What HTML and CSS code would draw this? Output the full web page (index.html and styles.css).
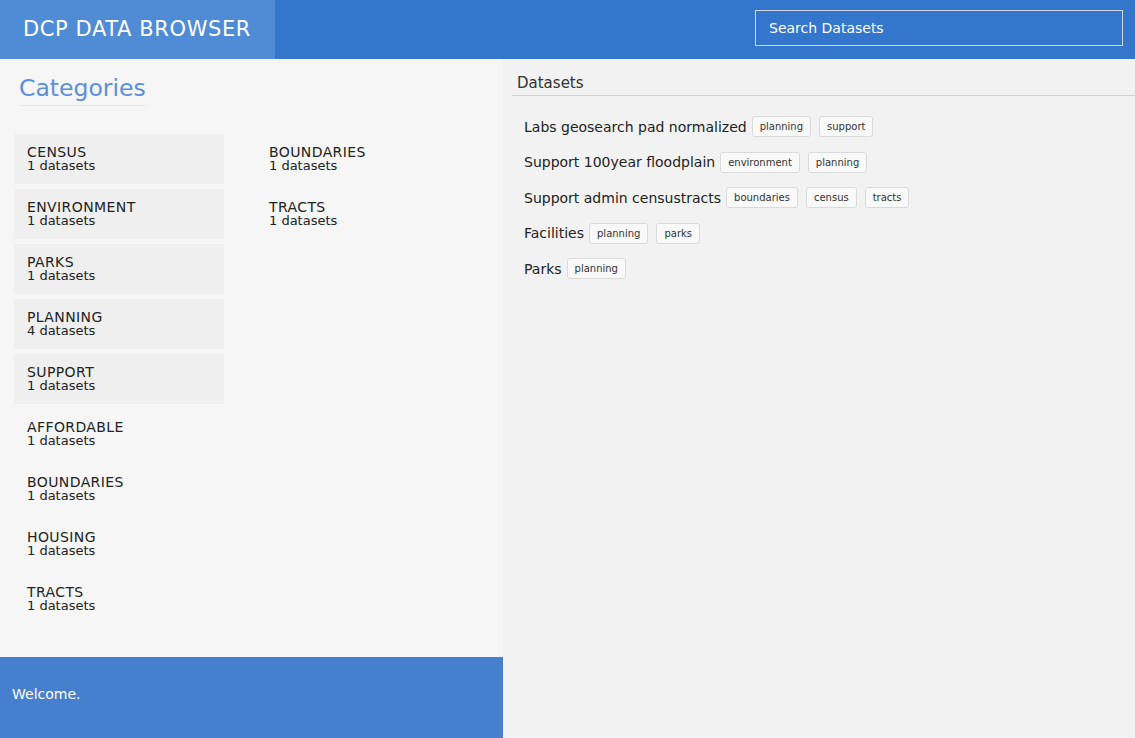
FILE: index.html
```html
<!DOCTYPE html>
<html>
<head>
<meta charset="utf-8">
<link rel="stylesheet" href="styles.css">
</head>
<body>
<header class="topbar">
  <div class="brand">DCP DATA BROWSER</div>
  <div class="search-wrap">
    <div class="search">Search Datasets</div>
  </div>
</header>
<div class="layout">
  <aside class="sidebar">
    <div class="sidebar-body">
      <h2 class="cat-title">Categories</h2>
      <div class="cat-grid">
        <div class="cat-col">
          <div class="cat filled"><div class="cat-name">CENSUS</div><div class="cat-count">1 datasets</div></div>
          <div class="cat filled"><div class="cat-name">ENVIRONMENT</div><div class="cat-count">1 datasets</div></div>
          <div class="cat filled"><div class="cat-name">PARKS</div><div class="cat-count">1 datasets</div></div>
          <div class="cat filled"><div class="cat-name">PLANNING</div><div class="cat-count">4 datasets</div></div>
          <div class="cat filled"><div class="cat-name">SUPPORT</div><div class="cat-count">1 datasets</div></div>
          <div class="cat"><div class="cat-name">AFFORDABLE</div><div class="cat-count">1 datasets</div></div>
          <div class="cat"><div class="cat-name">BOUNDARIES</div><div class="cat-count">1 datasets</div></div>
          <div class="cat"><div class="cat-name">HOUSING</div><div class="cat-count">1 datasets</div></div>
          <div class="cat"><div class="cat-name">TRACTS</div><div class="cat-count">1 datasets</div></div>
        </div>
        <div class="cat-col">
          <div class="cat"><div class="cat-name">BOUNDARIES</div><div class="cat-count">1 datasets</div></div>
          <div class="cat"><div class="cat-name">TRACTS</div><div class="cat-count">1 datasets</div></div>
        </div>
      </div>
    </div>
    <footer class="welcome">Welcome.</footer>
  </aside>
  <main class="main">
    <h3 class="ds-title">Datasets</h3>
    <ul class="ds-list">
      <li class="ds"><span class="ds-name">Labs geosearch pad normalized</span><span class="tag">planning</span><span class="tag">support</span></li>
      <li class="ds"><span class="ds-name">Support 100year floodplain</span><span class="tag">environment</span><span class="tag">planning</span></li>
      <li class="ds"><span class="ds-name">Support admin censustracts</span><span class="tag">boundaries</span><span class="tag">census</span><span class="tag">tracts</span></li>
      <li class="ds"><span class="ds-name">Facilities</span><span class="tag">planning</span><span class="tag">parks</span></li>
      <li class="ds"><span class="ds-name">Parks</span><span class="tag">planning</span></li>
    </ul>
  </main>
</div>
</body>
</html>
```
FILE: styles.css
```css
* { box-sizing: border-box; }
html, body { margin: 0; padding: 0; }
body {
  width: 1135px;
  height: 738px;
  overflow: hidden;
  font-family: "DejaVu Sans", "Open Sans", sans-serif;
  color: #222;
  background: #f2f2f2;
  display: flex;
  flex-direction: column;
}
.topbar {
  height: 59px;
  flex: none;
  display: flex;
  background: #3476cc;
}
.brand {
  width: 275px;
  background: #508bd5;
  color: #fff;
  font-size: 21px;
  padding-left: 23px;
  padding-bottom: 2px;
  display: flex;
  align-items: center;
  letter-spacing: 0.6px;
}
.search-wrap {
  flex: 1;
  display: flex;
  justify-content: flex-end;
  padding: 10px 12px 0 0;
}
.search {
  width: 368px;
  height: 36px;
  border: 1px solid #cfd8e6;
  color: #fff;
  font-size: 14px;
  padding-left: 13px;
  display: flex;
  align-items: center;
}
.layout {
  flex: 1;
  display: flex;
  min-height: 0;
}
.sidebar {
  width: 503px;
  flex: none;
  display: flex;
  flex-direction: column;
  background: #f6f6f6;
}
.sidebar-body {
  flex: 1;
  padding: 14px 0 0 14px;
}
.cat-title {
  display: inline-block;
  margin: 0 0 0 5px;
  font-weight: normal;
  font-size: 23.5px;
  line-height: 30px;
  color: #5b8fe0;
  padding-bottom: 2px;
  border-bottom: 1px dotted #d6d6d6;
}
.cat-grid {
  display: flex;
  gap: 32px;
  margin-top: 28px;
}
.cat-col {
  width: 210px;
  display: flex;
  flex-direction: column;
  gap: 5px;
}
.cat {
  height: 50px;
  padding: 11px 13px 0;
  font-size: 13px;
  line-height: 14px;
  color: #222;
}
.cat-name {
  font-size: 14px;
  letter-spacing: 0.4px;
}
.cat.filled { background: #efefef; }
.welcome {
  height: 81px;
  flex: none;
  background: #477fcf;
  color: #fff;
  font-family: "DejaVu Sans", sans-serif;
  font-size: 14px;
  padding-left: 12px;
  padding-bottom: 8px;
  display: flex;
  align-items: center;
}
.main {
  flex: 1;
  padding: 15px 0 0 9px;
  background: #f2f2f2;
}
.ds-title {
  margin: 0;
  font-weight: normal;
  font-size: 15px;
  color: #333;
  padding: 0 0 3px 5px;
  border-bottom: 1px solid #d2d2d2;
}
.ds-list {
  list-style: none;
  margin: 0;
  padding: 13px 0 0 12px;
}
.ds {
  display: flex;
  align-items: center;
  height: 35.5px;
}
.ds-name {
  font-size: 14px;
  color: #222;
  margin-right: 5px;
}
.tag {
  font-size: 10px;
  color: #333;
  background: #f9f9f9;
  border: 1px solid #dadada;
  border-radius: 3px;
  height: 21px;
  padding: 0 7px;
  display: flex;
  align-items: center;
  margin-right: 8px;
}
```
